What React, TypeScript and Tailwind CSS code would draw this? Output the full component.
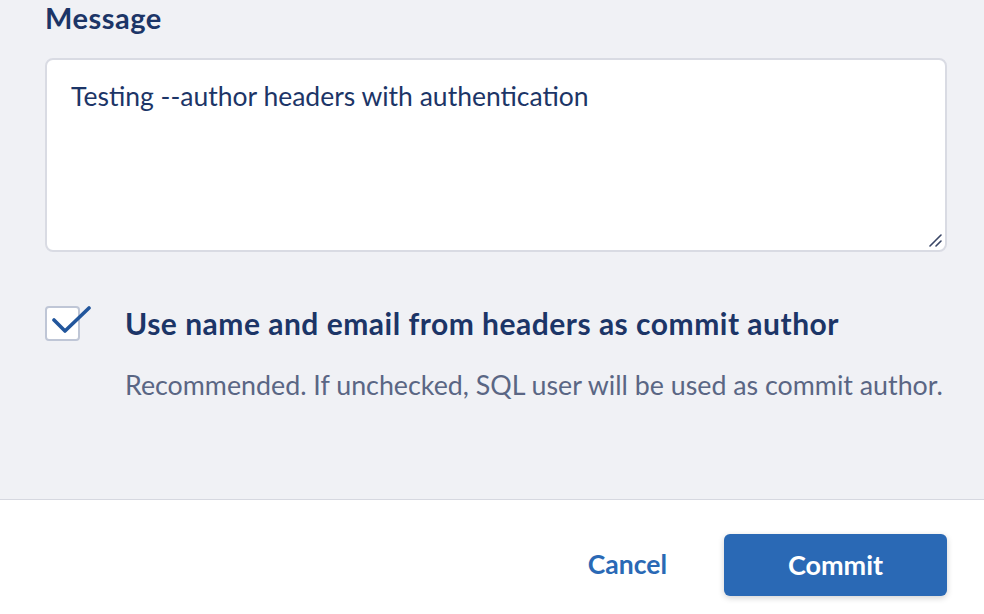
export default function App() {
  return (
    <div
      className="flex flex-col w-[984px] h-[614px] overflow-hidden bg-white"
      style={{ fontFamily: 'Lato, "Open Sans", sans-serif' }}
    >
      <div className="flex flex-col flex-1 bg-[#f0f1f5] pl-[45px] pr-[37px] border-b border-[#d6d8e0]">
        <h2 className="mt-[2px] text-[29px] leading-[32px] tracking-[0.5px] font-bold text-[#1c3567]">Message</h2>

        <div className="relative mt-[24px] h-[194px] rounded-[8px] border-2 border-[#d9dbe3] bg-white px-[24px] pt-[20px]">
          <p className="text-[26.5px] leading-[32px] text-[#1c3567]">
            Testing --author headers with authentication
          </p>
          <svg
            className="absolute right-[3px] bottom-[3px]"
            width="14"
            height="14"
            viewBox="0 0 14 14"
          >
            <path d="M2 13 L13 2 M8 13 L13 8" stroke="#3a4666" strokeWidth="1.6" strokeLinecap="round" />
          </svg>
        </div>

        <div className="flex items-start mt-[54px] gap-[45px]">
          <div className="relative w-[35px] h-[35px] shrink-0 rounded-[4px] border-2 border-[#bfc6d6] bg-white">
            <svg className="absolute -top-[4px] left-[4px]" width="40" height="34" viewBox="0 0 40 34">
              <path
                d="M3 16 L14 27 L38 4"
                fill="none"
                stroke="#22569c"
                strokeWidth="3.6"
                strokeLinecap="round"
                strokeLinejoin="round"
              />
            </svg>
          </div>
          <div className="flex flex-col">
            <span className="text-[30px] leading-[34px] tracking-[0.5px] font-bold text-[#1c3567]">
              Use name and email from headers as commit author
            </span>
            <span className="mt-[30px] text-[26.8px] leading-[30px] text-[#5a6684]">
              Recommended. If unchecked, SQL user will be used as commit author.
            </span>
          </div>
        </div>
      </div>

      <div className="flex items-center justify-end h-[114px] pt-[16px] pr-[37px] gap-[57px]">
        <button className="text-[26.5px] font-bold text-[#2a69b5]">Cancel</button>
        <button className="w-[223px] h-[62px] rounded-[6px] bg-[#2a69b5] text-[27px] font-bold text-white shadow-[0_2px_6px_rgba(0,0,0,0.18)]">
          Commit
        </button>
      </div>
    </div>
  );
}
